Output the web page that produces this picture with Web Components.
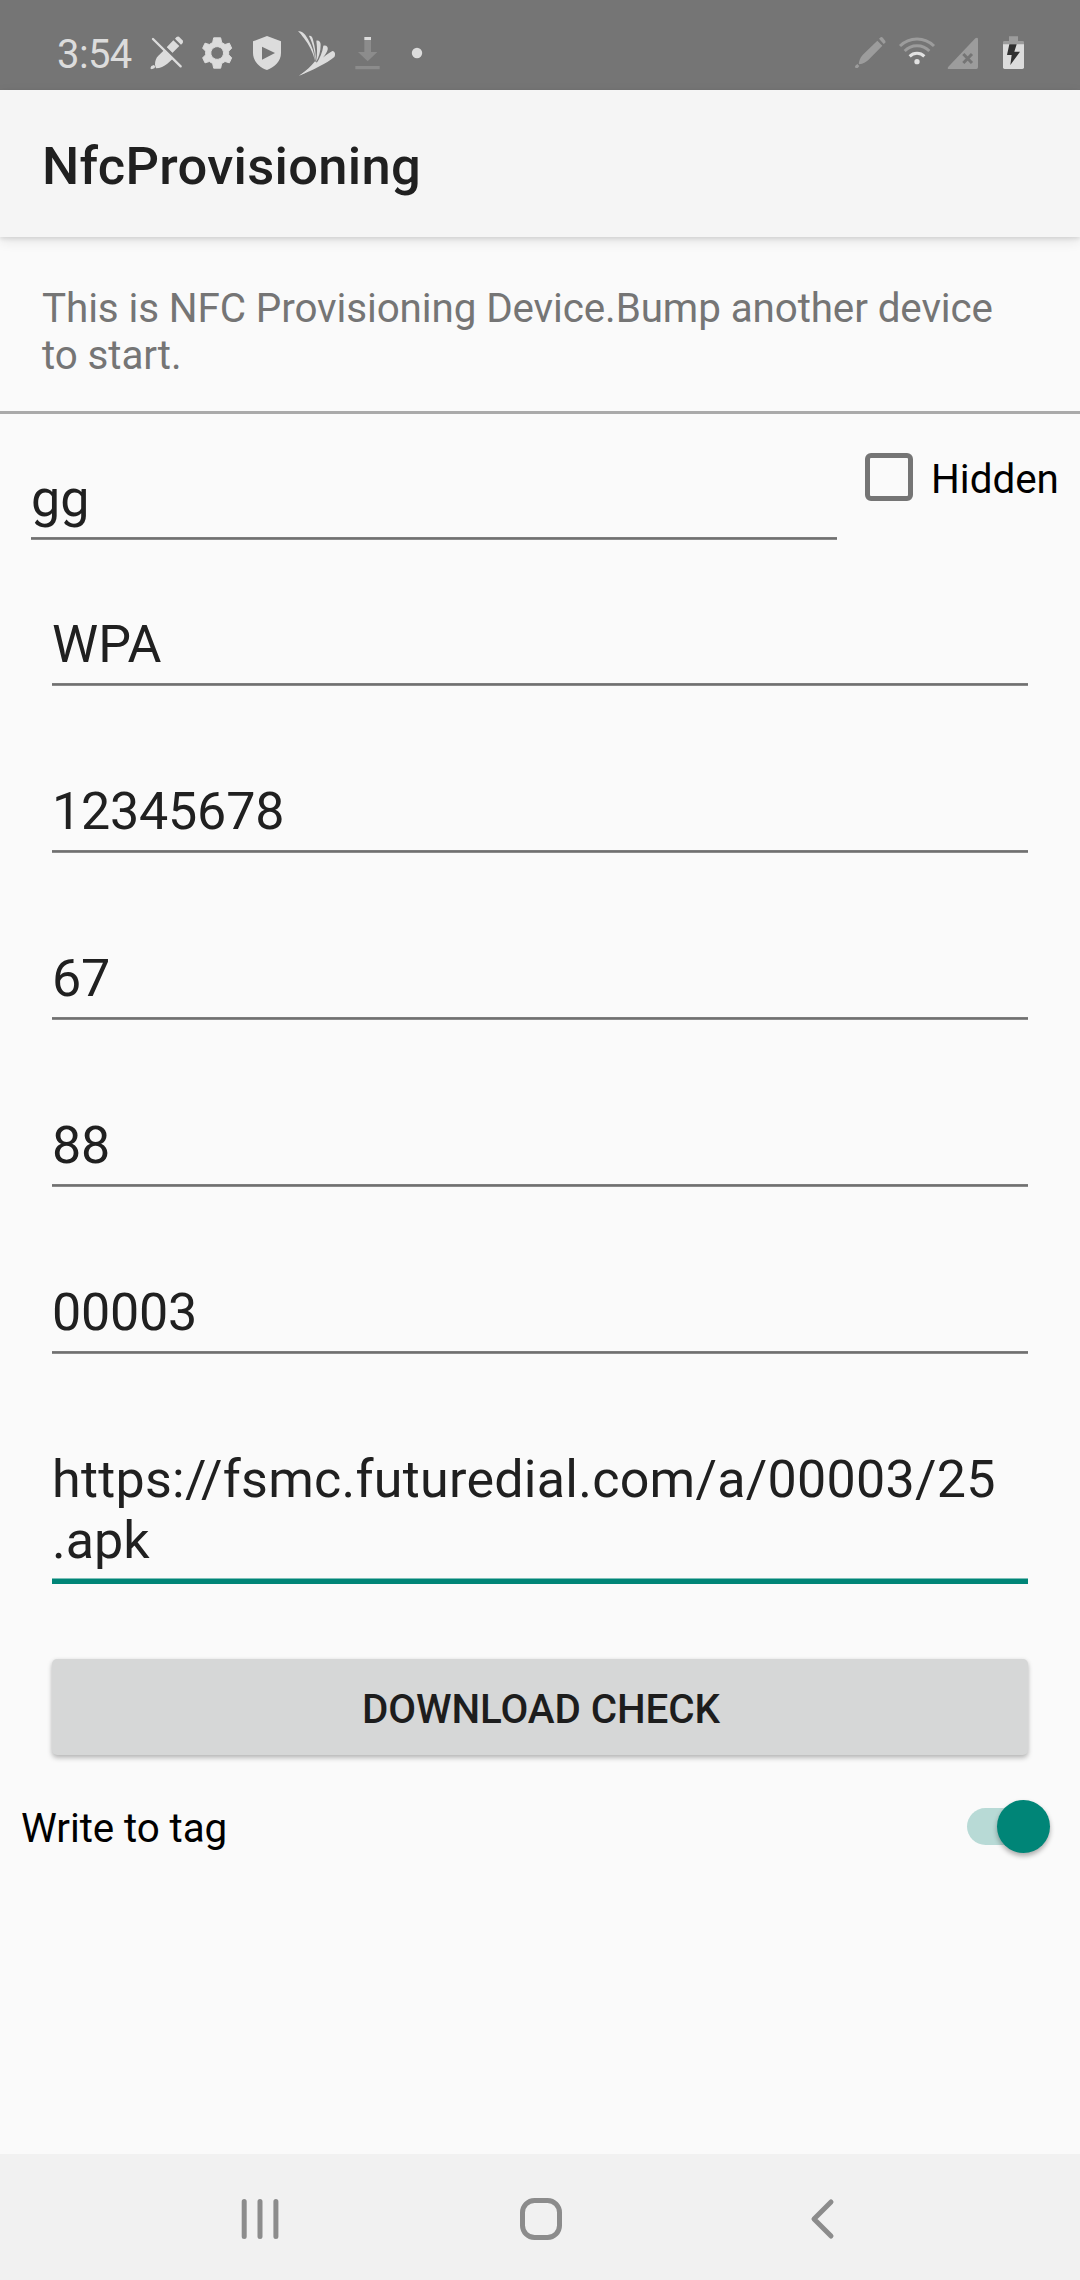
<!DOCTYPE html>
<html lang="en">
<head>
<meta charset="utf-8">
<title>NfcProvisioning</title>
<style>
html,body{margin:0;padding:0;background:#fafafa}
body{width:1080px;height:2280px;overflow:hidden;font-family:Roboto,sans-serif}
</style>
</head>
<body>
<provisioning-app></provisioning-app>
<script>
const define = (name, html) => customElements.define(name, class extends HTMLElement {
  constructor() {
    super();
    const t = document.createElement('template');
    t.innerHTML = html;
    this.attachShadow({mode: 'open'}).appendChild(t.content.cloneNode(true));
  }
});

define('status-bar', `
<style>
:host{display:flex;height:90px;background:#757575;color:#dcdcdc;fill:#dcdcdc;justify-content:space-between}
.group{display:flex}
.time{width:88px;padding-left:57px;box-sizing:content-box;font-size:40px;line-height:47px;padding-top:31px;letter-spacing:-.6px}
svg{display:block;height:90px;flex:none}
.right{padding-right:54px}
.dim{fill:#9c9c9c}
</style>
<div class="group">
<span class="time"><slot></slot></span>
<svg style="width:45px" viewBox="315 -60 135 270"><path d="M345 134c0-12 3-20 10-27l20-19 26 26-19 17c-10 8-21 13-34 14zM334 138l8-3 4 5-3 5q-9 5-12 0zM380 82l20-21 18 17-21 21zM405 56q6-9 12-6l12 12q2 6-6 12z"/><path d="M331 61l92 88" stroke="#757575" stroke-width="9" transform="translate(7 -13)"/><path d="M339 57l83 82" stroke="#dcdcdc" stroke-width="7" stroke-linecap="round"/></svg>
<svg style="width:40px;margin-left:8px" viewBox="24 -60 120 270"><path fill-rule="evenodd" stroke="#dcdcdc" stroke-width="3" stroke-linejoin="round" d="M71 53.500h21l3 14 10 6 13-4 7 15-9 9v11l9 9-7 15-13-4-10 6-3 14H71l-3-14-10-6-13 4-7-15 9-9V93.500l-9-9 7-15 13 4 10-6zM81.500 80a19 19 0 1 0 .01 0z"/></svg>
<svg style="width:38px;margin-left:10px" viewBox="174 -60 114 270"><path fill-rule="evenodd" d="M231 48l42 16v35c0 24-19 43-42 51-23-8-42-27-42-51V64zM216 80v39l39-20z"/></svg>
<svg style="width:42px;margin-left:10px" viewBox="318 -60 126 270"><path d="M324 34c13-3 22 9 30 24 12 21 20 41 21 65-6-26-18-49-33-68-7-9-11-16-18-21zM357 48c6-2 10 3 12 11 6 22 10 46 8 68-2-28-7-52-20-79zM379 62c8-2 13 4 13 12 0 19-5 37-14 52 4-22 4-42 1-64zM400 77c10-2 15 4 13 12-5 15-19 31-35 43 12-17 19-35 22-55zM427 93c9 1 10 12 6 18-25 20-62 38-106 56 41-25 64-52 100-74z"/><path d="M327 167c20-13 36-28 48-43l6 4c-13 17-31 30-54 39z"/></svg>
<svg style="width:30px;margin-left:14px" viewBox="486 -60 90 270"><path fill="#8c8c8c" d="M523 60h20v36h19l-29 28-29-28h19zM496 138h73v10h-73z"/><path d="M523 51h20v9h-20z"/></svg>
<svg style="width:16px;margin-left:27px" viewBox="657 -60 48 270"><circle cx="681" cy="99" r="15.500"/></svg>
</div>
<div class="group right">
<svg class="dim" style="width:35px" viewBox="39 -60 105 270"><path d="M112 62l15 15-42 43c-8 7-15 11-27 13q-3-1-1-6c3-11 6-17 13-24zM117 56l5-4q4-2 7 2l7 9q2 4-1 6l-4 3zM46 137l6-5 6 6-4 5q-4 2-8 0-2-3 0-6z"/></svg>
<svg style="width:40px;margin-left:9px" viewBox="171 -60 120 270"><g fill="none" stroke="#9c9c9c" stroke-width="9"><path d="M180 78a72 72 0 0 1 102 0"/><path d="M194 93a52 52 0 0 1 74 0"/><path stroke="#e2e2e2" d="M209 109a31 31 0 0 1 44 0"/></g><circle cx="231" cy="125" r="8" fill="#e2e2e2"/></svg>
<svg class="dim" style="width:35px;margin-left:8px" viewBox="315 -60 105 270"><path d="M406 55q8-4 8 3v84q0 5-5 5h-81q-8 0-3-7z"/><path d="M370 102l26 27M396 102l-26 27" stroke="#757575" stroke-width="9"/></svg>
<svg style="width:26px;margin-left:20px" viewBox="480 -60 78 270"><path class="dim" d="M507 49h27v14h14q4 0 4 4v8h-63v-8q0-4 4-4h14z"/><path d="M489 73h63v69q0 5-5 5h-53q-5 0-5-5z"/><path fill="#303030" d="M508 73h22l-7 22h17l-29 40 4-30h-14z"/></svg>
</div>`);

define('app-bar', `
<style>
:host{display:flex;align-items:center;height:147px;padding:0 42px;box-sizing:border-box;background:#f5f5f5;color:#202020;font-size:52.5px;font-weight:500;line-height:62px;letter-spacing:.3px;box-shadow:0 2px 4px rgba(0,0,0,.1),0 4px 12px rgba(0,0,0,.09);position:relative}
span{padding-top:5px}
</style><span><slot></slot></span>`);

define('intro-text', `
<style>
:host{display:block;height:177px;box-sizing:border-box;padding:48px 42px 0;color:#757575;font-size:40.4px;line-height:47px;letter-spacing:-.11px;border-bottom:3px solid #aaa}
</style><slot></slot>`);

define('text-field', `
<style>
:host{display:block;padding-top:1px;color:#202020;font-size:52px;line-height:61px;overflow-wrap:anywhere}
:host([numeric]){letter-spacing:-.2px}
.line{height:3px;margin-top:8px;background:linear-gradient(#7d7d7d 1px,#707070 1px 2px,#8b8b8b 2px)}
:host([focused]) .line{height:6px;margin-top:7px;background:linear-gradient(#7cc0b8 1px,#008577 1px)}
</style><slot></slot><div class="line"></div>`);

define('check-box', `
<style>
:host{display:flex;align-items:flex-start;gap:18px;color:#000;font-size:40.4px;line-height:47px}
i{display:block;flex:none;width:38px;height:38px;border:5px solid #757575;border-radius:6px}
span{padding-top:3px}
</style><i></i><span><slot></slot></span>`);

define('raised-button', `
<style>
:host{display:flex;align-items:center;justify-content:center;height:96px;background:#d6d7d7;border-radius:5px;color:#1d1d1d;font-size:40.4px;font-weight:500;line-height:47px;letter-spacing:-.1px;box-shadow:0 3px 5px rgba(0,0,0,.25),0 0 4px rgba(0,0,0,.06)}
span{padding:5px 0 0 2px}
</style><span><slot></slot></span>`);

define('switch-row', `
<style>
:host{display:flex;align-items:center;justify-content:space-between;color:#000;font-size:40.4px;line-height:47px;letter-spacing:-.1px}
.track{display:flex;align-items:center;justify-content:flex-end;width:73px;height:37px;border-radius:19px;background:#b8dad6;margin-right:10px}
.thumb{width:53px;height:53px;flex:none;border-radius:50%;background:#008577;margin-right:-10px;box-shadow:0 3px 5px rgba(0,0,0,.32)}
span{padding-top:4px}
</style><span><slot></slot></span><div class="track"><div class="thumb"></div></div>`);

define('nav-bar', `
<style>
:host{display:flex;align-items:center;height:126px;box-sizing:border-box;padding:4px 238px 0;background:#f1f1f1}
svg{display:block;fill:none;stroke:#8c8c8c;stroke-linecap:round;stroke-linejoin:round}
.home{margin:0 239px 0 235px}
</style>
<svg width="44" height="50" viewBox="0 0 44 50" stroke-width="5"><path d="M6.200 7.500v35M22 7.500v35M37.900 7.500v35"/></svg>
<svg class="home" width="48" height="50" viewBox="0 0 48 50" stroke-width="5"><rect x="5.500" y="6.500" width="37" height="37" rx="12"/></svg>
<svg width="36" height="50" viewBox="0 0 36 50" stroke-width="5"><path d="M27 8L10 25l17 17"/></svg>`);

define('provisioning-app', `
<style>
:host{display:flex;flex-direction:column;width:1080px;height:2280px;background:#fafafa}
.network{display:flex;justify-content:space-between;align-items:flex-start;padding:53px 21px 0 31px;height:126px;box-sizing:border-box}
.network text-field{width:806px}
.network check-box{width:194px;margin-top:-14px}
.fields{display:flex;flex-direction:column;gap:94px;padding:73px 52px 0}
.fields text-field{box-sizing:border-box}
.url{letter-spacing:.27px}
.url span{letter-spacing:0}
raised-button{margin:75px 52px 0}
switch-row{margin:46px 30px 0 21px}
nav-bar{margin-top:auto}
</style>
<status-bar>3:54</status-bar>
<app-bar>NfcProvisioning</app-bar>
<intro-text>This is NFC Provisioning Device.Bump another device to start.</intro-text>
<div class="network"><text-field>gg</text-field><check-box>Hidden</check-box></div>
<div class="fields">
<text-field>WPA</text-field>
<text-field numeric>12345678</text-field>
<text-field numeric>67</text-field>
<text-field numeric>88</text-field>
<text-field numeric>00003</text-field>
<text-field focused class="url">https://fsmc.futuredial.com/a/00003/25<br><span>.apk</span></text-field>
</div>
<raised-button>DOWNLOAD CHECK</raised-button>
<switch-row>Write to tag</switch-row>
<nav-bar></nav-bar>`);
</script>
</body>
</html>
